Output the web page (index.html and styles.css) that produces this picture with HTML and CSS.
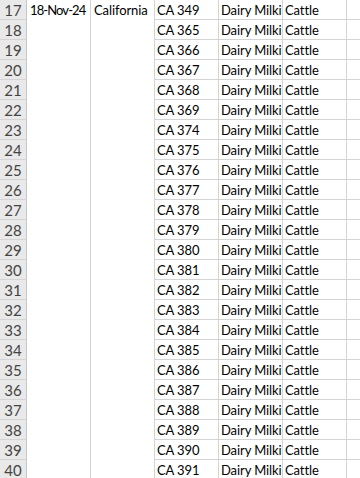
FILE: index.html
```html
<!DOCTYPE html>
<html>
<head>
<meta charset="utf-8">
<link rel="stylesheet" href="styles.css">
</head>
<body>
<div class="sheet">
  <div class="cell merged col-a date">18-Nov-24</div>
  <div class="cell merged col-b">California</div>
  <div class="hdr">17</div><div class="cell">CA 349</div><div class="cell">Dairy Milking</div><div class="cell">Cattle</div><div class="cell"></div>
  <div class="hdr">18</div><div class="cell">CA 365</div><div class="cell">Dairy Milking</div><div class="cell">Cattle</div><div class="cell"></div>
  <div class="hdr">19</div><div class="cell">CA 366</div><div class="cell">Dairy Milking</div><div class="cell">Cattle</div><div class="cell"></div>
  <div class="hdr">20</div><div class="cell">CA 367</div><div class="cell">Dairy Milking</div><div class="cell">Cattle</div><div class="cell"></div>
  <div class="hdr">21</div><div class="cell">CA 368</div><div class="cell">Dairy Milking</div><div class="cell">Cattle</div><div class="cell"></div>
  <div class="hdr">22</div><div class="cell">CA 369</div><div class="cell">Dairy Milking</div><div class="cell">Cattle</div><div class="cell"></div>
  <div class="hdr">23</div><div class="cell">CA 374</div><div class="cell">Dairy Milking</div><div class="cell">Cattle</div><div class="cell"></div>
  <div class="hdr">24</div><div class="cell">CA 375</div><div class="cell">Dairy Milking</div><div class="cell">Cattle</div><div class="cell"></div>
  <div class="hdr">25</div><div class="cell">CA 376</div><div class="cell">Dairy Milking</div><div class="cell">Cattle</div><div class="cell"></div>
  <div class="hdr">26</div><div class="cell">CA 377</div><div class="cell">Dairy Milking</div><div class="cell">Cattle</div><div class="cell"></div>
  <div class="hdr">27</div><div class="cell">CA 378</div><div class="cell">Dairy Milking</div><div class="cell">Cattle</div><div class="cell"></div>
  <div class="hdr">28</div><div class="cell">CA 379</div><div class="cell">Dairy Milking</div><div class="cell">Cattle</div><div class="cell"></div>
  <div class="hdr">29</div><div class="cell">CA 380</div><div class="cell">Dairy Milking</div><div class="cell">Cattle</div><div class="cell"></div>
  <div class="hdr">30</div><div class="cell">CA 381</div><div class="cell">Dairy Milking</div><div class="cell">Cattle</div><div class="cell"></div>
  <div class="hdr">31</div><div class="cell">CA 382</div><div class="cell">Dairy Milking</div><div class="cell">Cattle</div><div class="cell"></div>
  <div class="hdr">32</div><div class="cell">CA 383</div><div class="cell">Dairy Milking</div><div class="cell">Cattle</div><div class="cell"></div>
  <div class="hdr">33</div><div class="cell">CA 384</div><div class="cell">Dairy Milking</div><div class="cell">Cattle</div><div class="cell"></div>
  <div class="hdr">34</div><div class="cell">CA 385</div><div class="cell">Dairy Milking</div><div class="cell">Cattle</div><div class="cell"></div>
  <div class="hdr">35</div><div class="cell">CA 386</div><div class="cell">Dairy Milking</div><div class="cell">Cattle</div><div class="cell"></div>
  <div class="hdr">36</div><div class="cell">CA 387</div><div class="cell">Dairy Milking</div><div class="cell">Cattle</div><div class="cell"></div>
  <div class="hdr">37</div><div class="cell">CA 388</div><div class="cell">Dairy Milking</div><div class="cell">Cattle</div><div class="cell"></div>
  <div class="hdr">38</div><div class="cell">CA 389</div><div class="cell">Dairy Milking</div><div class="cell">Cattle</div><div class="cell"></div>
  <div class="hdr">39</div><div class="cell">CA 390</div><div class="cell">Dairy Milking</div><div class="cell">Cattle</div><div class="cell"></div>
  <div class="hdr">40</div><div class="cell">CA 391</div><div class="cell">Dairy Milking</div><div class="cell">Cattle</div><div class="cell"></div>
</div>
</body>
</html>
```
FILE: styles.css
```css
html, body {
  margin: 0;
  padding: 0;
  background: #ffffff;
  overflow: hidden;
  width: 360px;
  height: 478px;
}
.sheet {
  display: grid;
  grid-template-columns: 27px 64px 64px 64px 64px 64px 64px;
  grid-auto-rows: 20px;
  width: 411px;
  font-family: Lato, "Noto Sans", sans-serif;
  font-size: 13px;
  letter-spacing: -0.1px;
  color: #000;
}
.hdr {
  grid-column: 1;
  background: #e9e9e9;
  border-right: 1px solid #c6c6c6;
  border-bottom: 1px solid #d4d4d4;
  color: #444444;
  font-size: 15px;
  letter-spacing: 0;
  text-align: center;
  line-height: 20px;
  box-sizing: border-box;
}
.cell {
  border-right: 1px solid #d4d4d4;
  border-bottom: 1px solid #d4d4d4;
  box-sizing: border-box;
  padding: 0 2px;
  line-height: 20px;
  white-space: nowrap;
  overflow: hidden;
}
.merged {
  grid-row: 1 / span 24;
  padding-left: 3px;
}
.date {
  letter-spacing: -0.9px;
}
.col-a { grid-column: 2; }
.col-b { grid-column: 3; }
```
